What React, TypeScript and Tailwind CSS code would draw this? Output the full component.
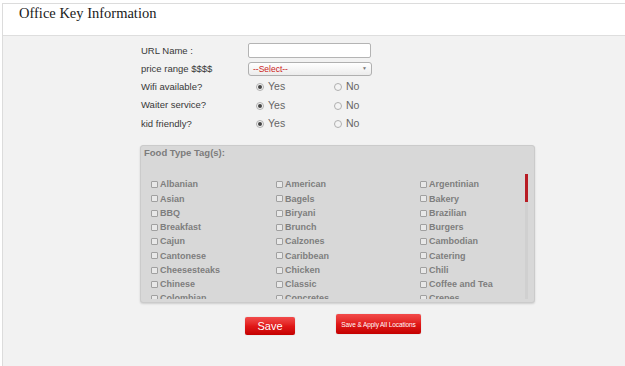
const foodTags = [
  ["Albanian", "American", "Argentinian"],
  ["Asian", "Bagels", "Bakery"],
  ["BBQ", "Biryani", "Brazilian"],
  ["Breakfast", "Brunch", "Burgers"],
  ["Cajun", "Calzones", "Cambodian"],
  ["Cantonese", "Caribbean", "Catering"],
  ["Cheesesteaks", "Chicken", "Chili"],
  ["Chinese", "Classic", "Coffee and Tea"],
  ["Colombian", "Concretes", "Crepes"],
  ["Cuban", "Cupcakes", "Deli"],
];

const Radio = ({ checked, label }: { checked?: boolean; label: string }) => (
  <div className="flex items-center gap-[4px]">
    <span className="w-[8px] h-[8px] rounded-full border border-[#b0b0b0] bg-[#f4f4f4] flex items-center justify-center">
      {checked && <span className="w-[4px] h-[4px] rounded-full bg-[#444]" />}
    </span>
    <span className="text-[#666] text-[10.5px]">{label}</span>
  </div>
);

const YesNoRow = ({ label }: { label: string }) => (
  <div className="flex items-center h-[18.3px]">
    <div className="w-[107px]">{label}</div>
    <div className="w-[86px] pl-[8px]">
      <Radio checked label="Yes" />
    </div>
    <Radio label="No" />
  </div>
);

const Tag = ({ name }: { name: string }) => (
  <div className="flex items-center h-[14.25px]">
    <span className="w-[7px] h-[7px] border border-[#a0a0a0] bg-[#e8e8e8] rounded-[1px] mr-[2px] -mt-[1px]" />
    <span>{name}</span>
  </div>
);

export default function App() {
  return (
    <div className="w-[625px] h-[366px] bg-white overflow-hidden font-['Liberation_Sans',Arial,sans-serif]">
      <div className="mt-[3px] ml-[2px] h-[363px] border-l border-t border-[#dcdcdc] flex flex-col">
        <div className="h-[32px] bg-white border-b border-[#dedede] pl-[16px]">
          <h1 className="font-['Liberation_Serif',serif] text-[14.5px] leading-[18px] text-[#1a1a1a]">
            Office Key Information
          </h1>
        </div>

        <div className="flex-1 bg-[#f2f2f2]">
          <div className="ml-[138px] pt-[5.5px] text-[9.5px] text-[#383838]">
            <div className="flex items-center h-[18.3px]">
              <div className="w-[107px]">URL Name :</div>
              <div className="w-[123px] h-[15px] bg-white border border-[#b4b4b4] rounded-[2px]" />
            </div>
            <div className="flex items-center h-[18.3px]">
              <div className="w-[107px]">price range $$$$</div>
              <div className="w-[124px] h-[14px] border border-[#b0b0b0] rounded-[3px] bg-gradient-to-b from-white to-[#ececec] flex items-center justify-between px-[4px]">
                <span className="text-[#cc2222] text-[8.5px]">--Select--</span>
                <span className="text-[#777] text-[5px]">▼</span>
              </div>
            </div>
            <YesNoRow label="Wifi available?" />
            <YesNoRow label="Waiter service?" />
            <YesNoRow label="kid friendly?" />
          </div>

          <div className="ml-[137px] mt-[12.5px] w-[395px] h-[158px] bg-[#d8d8d8] border border-[#cbcbcb] rounded-[3px] shadow-[0_1px_2px_rgba(0,0,0,0.15)] flex flex-col">
            <div className="pl-[3px] h-[28px] text-[9.5px] font-bold text-[#7c7c7c]">Food Type Tag(s):</div>
            <div className="flex h-[125px]">
              <div className="flex-1 overflow-hidden pl-[10px] pt-[3.5px] text-[9px] font-bold text-[#7e7e7e]">
                {foodTags.map((row) => (
                  <div key={row[0]} className="grid grid-cols-[125px_144px_1fr]">
                    {row.map((t) => (
                      <Tag key={t} name={t} />
                    ))}
                  </div>
                ))}
              </div>
              <div className="w-[3px] mr-[6px] bg-[#d0d0d0] flex flex-col">
                <div className="h-[28px] bg-[#b81c24]" />
              </div>
            </div>
          </div>

          <div className="flex ml-[242px] mt-[11px] gap-[41px] items-start">
            <button className="mt-[3px] w-[50px] h-[18px] rounded-[2px] bg-gradient-to-b from-[#f24a4a] via-[#e11818] to-[#c40000] text-white text-[11px] shadow-[0_0_1px_rgba(0,0,0,0.3)]">
              Save
            </button>
            <button className="w-[85px] h-[20px] rounded-[2px] bg-gradient-to-b from-[#f24a4a] via-[#e11818] to-[#c40000] text-white text-[6.5px] tracking-[-0.1px] shadow-[0_0_1px_rgba(0,0,0,0.3)]">
              Save &amp; Apply All Locations
            </button>
          </div>
        </div>
      </div>
    </div>
  );
}
